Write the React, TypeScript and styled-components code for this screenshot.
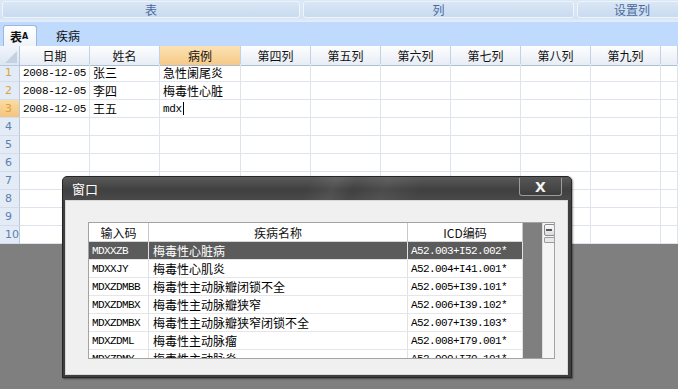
import React from 'react';
import styled, { createGlobalStyle, css } from 'styled-components';

const GlobalStyle = createGlobalStyle`
  html, body {
    margin: 0;
    padding: 0;
    background: #7f7f7f;
  }
  * {
    box-sizing: border-box;
  }
`;

const CJK = `"Noto Sans CJK SC", "Noto Sans", sans-serif`;
const MONO = `"Liberation Mono", "Noto Sans CJK SC", monospace`;

const columns = ['日期', '姓名', '病例', '第四列', '第五列', '第六列', '第七列', '第八列', '第九列'];
const colWidths = '20px 70px 70px 81px 70px 70px 70px 70px 70px 70px 1fr';

const gridRows = [
  ['2008-12-05', '张三', '急性阑尾炎'],
  ['2008-12-05', '李四', '梅毒性心脏'],
  ['2008-12-05', '王五', 'mdx'],
];

const diseases = [
  { code: 'MDXXZB', name: '梅毒性心脏病', icd: 'A52.003+I52.002*' },
  { code: 'MDXXJY', name: '梅毒性心肌炎', icd: 'A52.004+I41.001*' },
  { code: 'MDXZDMBB', name: '梅毒性主动脉瓣闭锁不全', icd: 'A52.005+I39.101*' },
  { code: 'MDXZDMBX', name: '梅毒性主动脉瓣狭窄', icd: 'A52.006+I39.102*' },
  { code: 'MDXZDMBX', name: '梅毒性主动脉瓣狭窄闭锁不全', icd: 'A52.007+I39.103*' },
  { code: 'MDXZDML', name: '梅毒性主动脉瘤', icd: 'A52.008+I79.001*' },
  { code: 'MDXZDMY', name: '梅毒性主动脉炎', icd: 'A52.009+I79.101*' },
];

const Page = styled.div`
  position: relative;
  width: 678px;
  height: 389px;
  overflow: hidden;
  display: flex;
  flex-direction: column;
  background: #7f7f7f;
  font-family: ${CJK};
  font-size: 12px;
`;

const Toolbar = styled.div`
  display: flex;
  gap: 3px;
  height: 22px;
  padding: 1px 0 4px 2px;
  background: linear-gradient(#dce8f6, #d4e3f4 80%, #e4eefa);
  width: 700px;
`;

const ToolButton = styled.div<{ $w: number; $align?: string }>`
  width: ${p => p.$w}px;
  flex-shrink: 0;
  display: flex;
  align-items: center;
  justify-content: ${p => p.$align || 'center'};
  padding-right: 26px;
  border: 1px solid #eef4fb;
  border-radius: 3px;
  background: linear-gradient(#d9e6f5, #c9dbf0);
  color: #4a6b9c;
  font-size: 12px;
  line-height: 15px;
`;

const ButtonLabel = styled.span<{ $shift?: number }>`
  margin-left: ${p => p.$shift || 0}px;
`;

const TabStrip = styled.div`
  display: flex;
  align-items: flex-end;
  height: 24px;
  padding-left: 3px;
  gap: 13px;
  background: #bfdafc;
`;

const Tab = styled.div<{ $active?: boolean }>`
  height: 21px;
  padding: 0 6px;
  display: flex;
  align-items: center;
  color: #111;
  font-size: 12px;
  ${p =>
    p.$active &&
    css`
      width: 34px;
      font-weight: bold;
      background: linear-gradient(#ffffff, #eef4fb);
      border: 1px solid #9fb8d8;
      border-bottom: none;
      border-radius: 3px 3px 0 0;
    `}
`;

const TabA = styled.span`
  font-family: "DejaVu Sans", sans-serif;
  font-size: 8px;
  font-weight: bold;
`;

const Sheet = styled.div`
  display: grid;
  grid-template-columns: ${colWidths};
  grid-auto-rows: 18px;
  background: #fff;
`;

const Corner = styled.div`
  height: 20px;
  background: linear-gradient(#f1f5fb, #dbe6f3);
  border-right: 1px solid #b9c9dd;
  border-bottom: 1px solid #b9c9dd;
  position: relative;
  &::after {
    content: '';
    position: absolute;
    right: 2px;
    bottom: 2px;
    border-left: 12px solid transparent;
    border-bottom: 12px solid #c3d1e2;
  }
`;

const ColHead = styled.div<{ $selected?: boolean }>`
  height: 20px;
  display: flex;
  align-items: center;
  justify-content: center;
  color: #111;
  border-right: 1px solid #c3d1e2;
  border-bottom: 1px solid #aebfd4;
  background: ${p =>
    p.$selected ? 'linear-gradient(#fbe2b3, #f6c987)' : 'linear-gradient(#fdfdfe, #e7edf5)'};
`;

const RowHead = styled.div<{ $state?: 'data' | 'current' }>`
  display: flex;
  align-items: center;
  padding-left: 5px;
  font-family: "DejaVu Sans", sans-serif;
  font-size: 11px;
  border-right: 1px solid #b9c9dd;
  border-bottom: 1px solid #d2ddeb;
  color: ${p => (p.$state ? '#d9a33f' : '#5d80ae')};
  background: ${p =>
    p.$state === 'current' ? 'linear-gradient(#fbdca4, #f5c47c)' : '#e3ebf6'};
`;

const Cell = styled.div<{ $mono?: boolean }>`
  display: flex;
  align-items: center;
  padding-left: 3px;
  border-right: 1px solid #dde4ec;
  border-bottom: 1px solid #dde4ec;
  color: #000;
  white-space: nowrap;
  overflow: hidden;
  font-family: ${p => (p.$mono ? MONO : CJK)};
  font-size: ${p => (p.$mono ? '11px' : '12px')};
  letter-spacing: ${p => (p.$mono ? '-0.3px' : '0')};
`;

const Caret = styled.span`
  display: inline-block;
  width: 1px;
  height: 13px;
  background: #000;
  margin-left: 1px;
`;

const Backdrop = styled.div`
  flex: 1;
  background: #7f7f7f;
`;

const Dialog = styled.div`
  position: absolute;
  left: 62px;
  top: 176px;
  width: 510px;
  height: 202px;
  display: flex;
  flex-direction: column;
  border: 1px solid #262626;
  border-radius: 5px 5px 0 0;
  background: #3e3e3e;
  box-shadow: 1px 1px 2px rgba(0, 0, 0, 0.45);
`;

const TitleBar = styled.div`
  height: 23px;
  display: flex;
  align-items: center;
  justify-content: space-between;
  padding: 0 9px 0 9px;
  border-radius: 4px 4px 0 0;
  background:
    linear-gradient(112deg, transparent 48%, rgba(255,255,255,0.07) 53%, transparent 57%, rgba(255,255,255,0.06) 63%, transparent 70%),
    linear-gradient(#5a5a5a, #404040 55%, #494949);
  color: #fff;
  font-size: 13px;
`;

const CloseButton = styled.div`
  width: 43px;
  height: 18px;
  margin-top: -3px;
  display: flex;
  align-items: center;
  justify-content: center;
  border: 1px solid #9c9c9c;
  border-top: none;
  border-radius: 0 0 3px 3px;
  background: linear-gradient(#555, #3d3d3d);
  color: #f4f4f4;
  font-family: "DejaVu Sans", sans-serif;
  font-weight: bold;
  font-size: 14px;
`;

const DialogBody = styled.div`
  flex: 1;
  margin: 0 3px 2px 2px;
  padding: 21px 0 0 22px;
  background: #f0f0f0;
  border: 1px solid #d8d8d8;
`;

const List = styled.div`
  width: 467px;
  height: 137px;
  display: grid;
  grid-template-columns: 60px 259px 115px 19px 13px;
  grid-template-rows: 19px;
  grid-auto-rows: 18px;
  overflow: hidden;
  border: 1px solid #a3a3a3;
  background: #fff;
  position: relative;
`;

const ListHead = styled.div`
  display: flex;
  align-items: center;
  justify-content: center;
  color: #111;
  background: #fff;
  border-right: 1px solid #c8c8c8;
  border-bottom: 1px solid #d6d6d6;
  font-size: 12px;
`;

const ListCell = styled.div<{ $selected?: boolean; $mono?: boolean }>`
  display: flex;
  align-items: center;
  padding-left: ${p => (p.$mono ? 3 : 4)}px;
  white-space: nowrap;
  overflow: hidden;
  border-right: 1px solid #e2e2e2;
  border-bottom: 1px solid #e6e6e6;
  background: ${p => (p.$selected ? '#5b5b5b' : '#fff')};
  color: ${p => (p.$selected ? '#fff' : '#000')};
  font-family: ${p => (p.$mono ? MONO : CJK)};
  font-size: ${p => (p.$mono ? '11px' : '12px')};
  letter-spacing: ${p => (p.$mono ? '-0.6px' : '0')};
`;

const EmptyColumn = styled.div`
  grid-column: 4;
  grid-row: 1 / span 20;
  background: #7f7f7f;
`;

const ScrollTrack = styled.div`
  grid-column: 5;
  grid-row: 1 / span 20;
  background: #f5f5f5;
  border-left: 1px solid #e0e0e0;
  display: flex;
  flex-direction: column;
  align-items: center;
  padding-top: 1px;
  position: relative;
`;

const ScrollBtn = styled.div<{ $bottom?: boolean }>`
  width: 11px;
  height: 12px;
  border: 1px solid #8c8c8c;
  border-radius: 2px;
  background: linear-gradient(#fafafa, #dcdcdc);
  display: flex;
  align-items: center;
  justify-content: center;
  ${p =>
    p.$bottom &&
    css`
      position: absolute;
      bottom: 0;
      left: 1px;
    `}
  &::after {
    content: '';
    width: 6px;
    height: 2px;
    background: #556;
  }
`;

const Thumb = styled.div`
  width: 11px;
  height: 6px;
  margin-top: 1px;
  border: 1px solid #9a9a9a;
  border-radius: 1px;
  background: #e8e8e8;
`;

export default function App() {
  return (
    <>
      <GlobalStyle />
      <Page>
        <Toolbar>
          <ToolButton $w={298}>
            <ButtonLabel $shift={26}>表</ButtonLabel>
          </ToolButton>
          <ToolButton $w={271}>
            <ButtonLabel $shift={26}>列</ButtonLabel>
          </ToolButton>
          <ToolButton $w={120} $align="flex-start">
            <ButtonLabel $shift={36}>设置列</ButtonLabel>
          </ToolButton>
        </Toolbar>
        <TabStrip>
          <Tab $active>
            表<TabA>A</TabA>
          </Tab>
          <Tab>疾病</Tab>
        </TabStrip>
        <Sheet>
          <Corner />
          {columns.map((c, i) => (
            <ColHead key={c} $selected={i === 2}>
              {c}
            </ColHead>
          ))}
          <ColHead />
          {Array.from({ length: 10 }).map((_, r) => {
            const data = gridRows[r];
            return (
              <React.Fragment key={r}>
                <RowHead $state={r < 2 ? 'data' : r === 2 ? 'current' : undefined}>{r + 1}</RowHead>
                <Cell $mono>{data ? data[0] : ''}</Cell>
                <Cell>{data ? data[1] : ''}</Cell>
                <Cell $mono={r === 2}>
                  {data ? data[2] : ''}
                  {r === 2 && <Caret />}
                </Cell>
                {Array.from({ length: 7 }).map((__, c) => (
                  <Cell key={c} />
                ))}
              </React.Fragment>
            );
          })}
        </Sheet>
        <Backdrop />

        <Dialog>
          <TitleBar>
            <span>窗口</span>
            <CloseButton>X</CloseButton>
          </TitleBar>
          <DialogBody>
            <List>
              <ListHead>输入码</ListHead>
              <ListHead>疾病名称</ListHead>
              <ListHead>ICD编码</ListHead>
              <EmptyColumn />
              <ScrollTrack>
                <ScrollBtn />
                <Thumb />
                <ScrollBtn $bottom />
              </ScrollTrack>
              {diseases.map((d, i) => (
                <React.Fragment key={i}>
                  <ListCell $mono $selected={i === 0}>{d.code}</ListCell>
                  <ListCell $selected={i === 0}>{d.name}</ListCell>
                  <ListCell $mono $selected={i === 0}>{d.icd}</ListCell>
                </React.Fragment>
              ))}
            </List>
          </DialogBody>
        </Dialog>
      </Page>
    </>
  );
}
